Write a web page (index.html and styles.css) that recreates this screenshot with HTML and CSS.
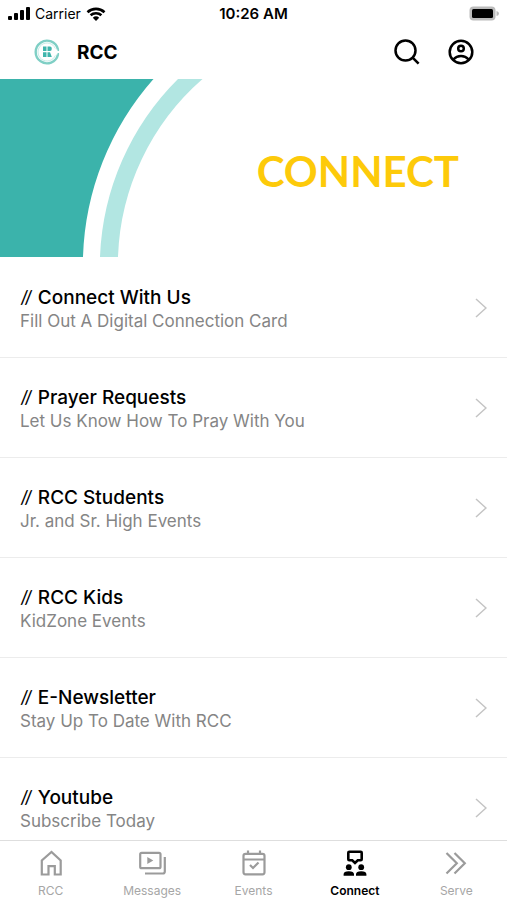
FILE: index.html
```html
<!DOCTYPE html>
<html lang="en">
<head>
    <meta charset="UTF-8">
    <meta name="viewport" content="width=device-width, initial-scale=1.0">
    <title>RCC - Connect</title>
    <link rel="stylesheet" href="styles.css">
</head>
<body>
    <div class="status-bar">
        <div class="status-left">
            <svg class="signal" viewBox="0 0 22 14" aria-hidden="true">
                <rect x="0" y="9" width="4" height="4" rx="1"/>
                <rect x="6" y="6" width="4" height="7" rx="1"/>
                <rect x="12" y="3" width="4" height="10" rx="1"/>
                <rect x="18" y="0" width="4" height="13" rx="1"/>
            </svg>
            <span>Carrier</span>
            <svg class="wifi" viewBox="0 0 20 14" aria-hidden="true">
                <path d="M1.5 5.2a12.4 12.4 0 0 1 17 0M4.600 8.300a8 8 0 0 1 10.800 0" fill="none" stroke="#000" stroke-width="2.600"/>
                <path d="M6.800 10.700a4.700 4.700 0 0 1 6.400 0L10 13.900z"/>
            </svg>
        </div>
        <div class="status-time">10:26 AM</div>
        <div class="status-right">
            <svg class="battery" viewBox="0 0 30 15" aria-hidden="true">
                <rect x="0.5" y="0.5" width="26" height="14" rx="4" fill="#bbb"/>
                <rect x="3" y="3" width="21" height="9" rx="1.500"/>
                <path d="M27.500 5q2.500 0.500 2.500 2.500t-2.500 2.500z" fill="#bbb"/>
            </svg>
        </div>
    </div>

    <header class="header">
        <svg class="logo" viewBox="0 0 26 26" aria-hidden="true">
            <path d="M24 10.500A11.300 11.300 0 1 0 24 15.500" fill="none" stroke="#7fcfc5" stroke-width="2.400"/>
            <path d="M21.300 9.500A9 9 0 1 0 21.300 16.500" fill="none" stroke="#c5ebe7" stroke-width="1"/>
            <path d="M24.300 10v2M24.300 14v2" stroke="#7fcfc5" stroke-width="1.500"/>
            <path d="M9 7.500h3.500V12H9zM9 13.300h3.500V18H9zM13.500 7.500h2.500q1.800 0 1.800 2.200T16 12h-2.500zM13.500 13.300h2.500l1.800 4.700h-4.300z" fill="#3fb5ac"/>
        </svg>
        <h1>RCC</h1>
        <button class="icon-btn" type="button" aria-label="Search">
            <svg viewBox="0 0 26 26" aria-hidden="true">
                <circle cx="11.500" cy="11.500" r="10"/>
                <path d="M18.600 18.600l6 6"/>
            </svg>
        </button>
        <button class="icon-btn" type="button" aria-label="Account">
            <svg viewBox="0 0 26 26" aria-hidden="true">
                <circle cx="13" cy="13" r="11.300"/>
                <circle cx="13" cy="9.500" r="2.800"/>
                <path d="M5.300 20.500q3.200-3.500 7.700-3.500t7.700 3.500"/>
            </svg>
        </button>
    </header>

    <main class="content">
        <section class="banner">
            <svg class="banner-art" viewBox="0 0 210 178" aria-hidden="true">
                <path d="M0 0H153.500A282 282 0 0 0 83 178H0z" fill="#3bb3ab"/>
                <path d="M178 0A265 265 0 0 0 100 178H118A247 247 0 0 1 202.500 0z" fill="#b2e6e2"/>
            </svg>
            <h2>CONNECT</h2>
        </section>

        <nav class="list" aria-label="Connect">
            <a class="row" href="#connect-with-us">
                <span class="row-text">
                    <span class="row-title"><span class="slashes">// </span>Connect With Us</span>
                    <span class="row-sub">Fill Out A Digital Connection Card</span>
                </span>
                <svg class="chevron" viewBox="0 0 12 20" aria-hidden="true"><path d="M1 1l10 9-10 9"/></svg>
            </a>
            <a class="row" href="#prayer">
                <span class="row-text">
                    <span class="row-title"><span class="slashes">// </span>Prayer Requests</span>
                    <span class="row-sub">Let Us Know How To Pray With You</span>
                </span>
                <svg class="chevron" viewBox="0 0 12 20" aria-hidden="true"><path d="M1 1l10 9-10 9"/></svg>
            </a>
            <a class="row" href="#students">
                <span class="row-text">
                    <span class="row-title"><span class="slashes">// </span>RCC Students</span>
                    <span class="row-sub">Jr. and Sr. High Events</span>
                </span>
                <svg class="chevron" viewBox="0 0 12 20" aria-hidden="true"><path d="M1 1l10 9-10 9"/></svg>
            </a>
            <a class="row" href="#kids">
                <span class="row-text">
                    <span class="row-title"><span class="slashes">// </span>RCC Kids</span>
                    <span class="row-sub">KidZone Events</span>
                </span>
                <svg class="chevron" viewBox="0 0 12 20" aria-hidden="true"><path d="M1 1l10 9-10 9"/></svg>
            </a>
            <a class="row" href="#newsletter">
                <span class="row-text">
                    <span class="row-title"><span class="slashes">// </span>E-Newsletter</span>
                    <span class="row-sub">Stay Up To Date With RCC</span>
                </span>
                <svg class="chevron" viewBox="0 0 12 20" aria-hidden="true"><path d="M1 1l10 9-10 9"/></svg>
            </a>
            <a class="row" href="#youtube">
                <span class="row-text">
                    <span class="row-title"><span class="slashes">// </span>Youtube</span>
                    <span class="row-sub">Subscribe Today</span>
                </span>
                <svg class="chevron" viewBox="0 0 12 20" aria-hidden="true"><path d="M1 1l10 9-10 9"/></svg>
            </a>
        </nav>
    </main>

    <nav class="tab-bar" aria-label="Main">
        <a class="tab" href="#home">
            <svg viewBox="0 0 28 28" aria-hidden="true">
                <path d="M4.800 25.500V11.500L14.500 3l9.200 8.500v14h-5.900v-8.300h-6.300v8.300z"/>
            </svg>
            <span>RCC</span>
        </a>
        <a class="tab" href="#messages">
            <svg viewBox="0 0 28 28" aria-hidden="true">
                <rect x="2.200" y="3.800" width="20.300" height="15.400" rx="1.500"/>
                <path d="M26.800 8v14.500q0 2-2 2H7"/>
                <path d="M9.300 8v7l6-3.500z" fill="#9b9b9b" stroke="none"/>
            </svg>
            <span>Messages</span>
        </a>
        <a class="tab" href="#events">
            <svg viewBox="0 0 28 28" aria-hidden="true">
                <rect x="3.500" y="4.800" width="21" height="20.500" rx="2"/>
                <path d="M3.500 10.500h21M8 1.500v4M20 1.500v4M10 16l3 3 5.500-5.500"/>
            </svg>
            <span>Events</span>
        </a>
        <a class="tab active" href="#connect" aria-current="page">
            <svg viewBox="0 0 28 28" aria-hidden="true">
                <path d="M8.300 2.800h11.400q1 0 1 1v6.500q0 1-1 1h-2.900L14 14l-2.800-2.700H8.300q-1 0-1-1V3.800q0-1 1-1z" fill="none"/>
                <g fill="#000" stroke="none">
                    <circle cx="7.800" cy="18.200" r="2.900"/>
                    <circle cx="20.200" cy="18.200" r="2.900"/>
                    <path d="M2.600 26.800v-1.600q0-3 5.200-3t5.200 3v1.600zM15 26.800v-1.600q0-3 5.200-3t5.200 3v1.600z"/>
                </g>
            </svg>
            <span>Connect</span>
        </a>
        <a class="tab" href="#serve">
            <svg viewBox="0 0 28 28" aria-hidden="true">
                <path d="M4.500 4l10.300 10.200L4.500 24.500M12.500 4l10.300 10.200-10.300 10.300"/>
            </svg>
            <span>Serve</span>
        </a>
    </nav>
</body>
</html>
```

FILE: styles.css
```css
* {
    margin: 0;
    padding: 0;
    box-sizing: border-box;
}

body {
    display: flex;
    flex-direction: column;
    height: 100vh;
    background-color: #fff;
    color: #000;
    font-family: 'Inter', 'Liberation Sans', sans-serif;
}

svg {
    display: block;
    flex-shrink: 0;
}

a {
    color: inherit;
    text-decoration: none;
}

/* Status bar */
.status-bar {
    display: flex;
    align-items: center;
    height: 27px;
    padding: 0 8px;
    font-size: 14px;
}

.status-left,
.status-right {
    display: flex;
    flex: 1;
    align-items: center;
    gap: 5px;
}

.status-right {
    justify-content: flex-end;
}

.status-time {
    font-size: 15px;
    font-weight: 600;
}

.signal {
    width: 22px;
    height: 14px;
}

.wifi {
    width: 20px;
    height: 14px;
}

.battery {
    width: 30px;
    height: 15px;
}

/* Header */
.header {
    display: flex;
    align-items: center;
    height: 52px;
    padding: 0 33px 2px 34px;
}

.logo {
    width: 26px;
    height: 26px;
}

.header h1 {
    flex: 1;
    margin-left: 17px;
    font-size: 19px;
    font-weight: 700;
}

.icon-btn {
    margin-left: 28px;
    border: none;
    background: none;
    cursor: pointer;
}

.icon-btn svg {
    width: 26px;
    height: 26px;
    fill: none;
    stroke: #000;
    stroke-width: 2.5;
}

/* Content */
.content {
    flex: 1;
    min-height: 0;
    overflow-y: auto;
    scrollbar-width: none;
}

.banner {
    display: flex;
    align-items: center;
    justify-content: space-between;
    padding-right: 48px;
}

.banner-art {
    width: 210px;
    height: 178px;
}

.banner h2 {
    padding-top: 6px;
    color: #fdca0a;
    font-family: 'Lato', sans-serif;
    font-size: 42px;
    font-weight: 700;
    line-height: 48px;
}

.list {
    padding-top: 1px;
}

.row {
    display: flex;
    align-items: center;
    justify-content: space-between;
    height: 100px;
    padding: 0 20px;
    border-bottom: 1px solid #ececec;
}

.row-text {
    display: flex;
    flex-direction: column;
    padding-top: 2px;
}

.row-title {
    font-size: 19px;
    font-weight: 500;
    line-height: 24px;
}

/* tall narrow slashes */
.slashes {
    font-family: 'Lato', sans-serif;
}

.row-sub {
    color: #858585;
    font-size: 17px;
    line-height: 22px;
}

.chevron {
    width: 12px;
    height: 20px;
    fill: none;
    stroke: #c4c4c4;
    stroke-width: 1.5;
}

/* Tab bar */
.tab-bar {
    display: flex;
    height: 60px;
    border-top: 1px solid #dedede;
    background-color: #fff;
}

.tab {
    display: flex;
    flex: 1;
    flex-direction: column;
    align-items: center;
    gap: 6px;
    padding-top: 8px;
    color: #a6a6a6;
    font-size: 12px;
    line-height: 16px;
}

.tab svg {
    width: 28px;
    height: 28px;
    fill: none;
    stroke: #9b9b9b;
    stroke-width: 2.2;
}

.tab.active {
    color: #000;
    font-weight: 600;
}

.tab.active svg {
    stroke: #000;
    stroke-width: 2.6;
}
```
